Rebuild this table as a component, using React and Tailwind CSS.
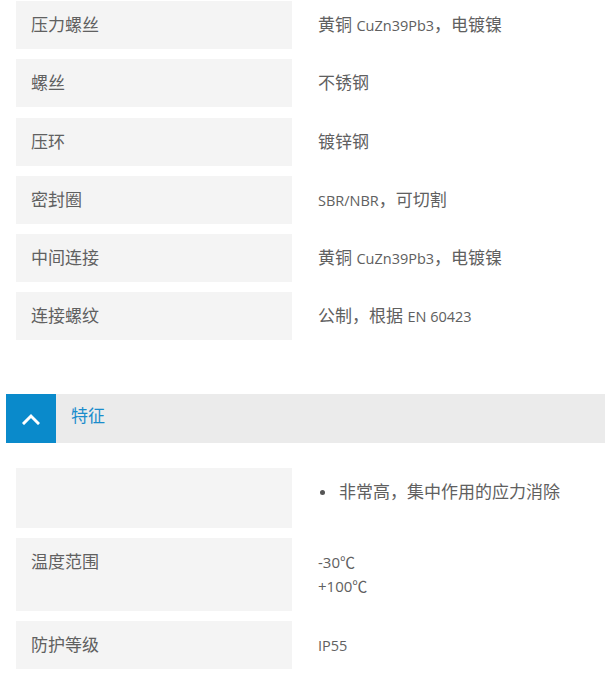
import React from 'react';

const font = { fontFamily: '"Open Sans", "Noto Sans CJK SC", sans-serif' };

// Latin runs render smaller than the CJK glyphs in the original
const L = ({ children }) => <span className="text-[14.5px] leading-none">{children}</span>;

const Row = ({ label, children, className = '' }) => (
    <div className={`flex ${className}`}>
        <div className="w-[276px] ml-4 shrink-0 bg-[#f4f4f4] px-[15px] py-3 text-[17px] leading-6 text-[#606060]">
            {label}
        </div>
        <div className="pl-[26px] py-3 text-[17px] leading-6 text-[#606060]">{children}</div>
    </div>
);

const materials = [
    ['压力螺丝', <>黄铜 <L>CuZn39Pb3</L>，电镀镍</>],
    ['螺丝', '不锈钢'],
    ['压环', '镀锌钢'],
    ['密封圈', <><L>SBR/NBR</L>，可切割</>],
    ['中间连接', <>黄铜 <L>CuZn39Pb3</L>，电镀镍</>],
    ['连接螺纹', <>公制，根据 <L>EN 60423</L></>],
];

export default function App() {
    return (
        <div className="w-[605px] h-[676px] bg-white overflow-hidden pt-px" style={font}>
            <div className="flex flex-col gap-[10.25px]">
                {materials.map(([label, value]) => (
                    <Row key={label} label={label} className="h-[48px]">{value}</Row>
                ))}
            </div>

            {/* Section header */}
            <div className="mt-[54px] ml-[6px] flex h-[49px] bg-[#ebebeb]">
                <div className="w-[50px] shrink-0 bg-[#0a8acb] flex items-center justify-center">
                    <svg width="18" height="12" viewBox="0 0 18 12" fill="none">
                        <path d="M2 10 L9 3 L16 10" stroke="white" strokeWidth="3" strokeLinecap="square" />
                    </svg>
                </div>
                <div className="pl-[15px] flex items-center pb-[6px] text-[17px] text-[#1a8ccb]">特征</div>
            </div>

            <div className="mt-[25px] flex flex-col gap-[10px]">
                <Row label="" className="h-[60px]">
                    <ul>
                        <li className="flex items-center">
                            <span className="w-[5px] h-[5px] rounded-full bg-[#555] ml-[2px] mr-[14px]" />
                            非常高，集中作用的应力消除
                        </li>
                    </ul>
                </Row>
                <Row label="温度范围" className="h-[73px]">
                    <div className="text-[15px]">-30℃</div>
                    <div className="text-[15px]">+100℃</div>
                </Row>
                <Row label="防护等级" className="h-[48px]">
                    <L>IP55</L>
                </Row>
            </div>
        </div>
    );
}
